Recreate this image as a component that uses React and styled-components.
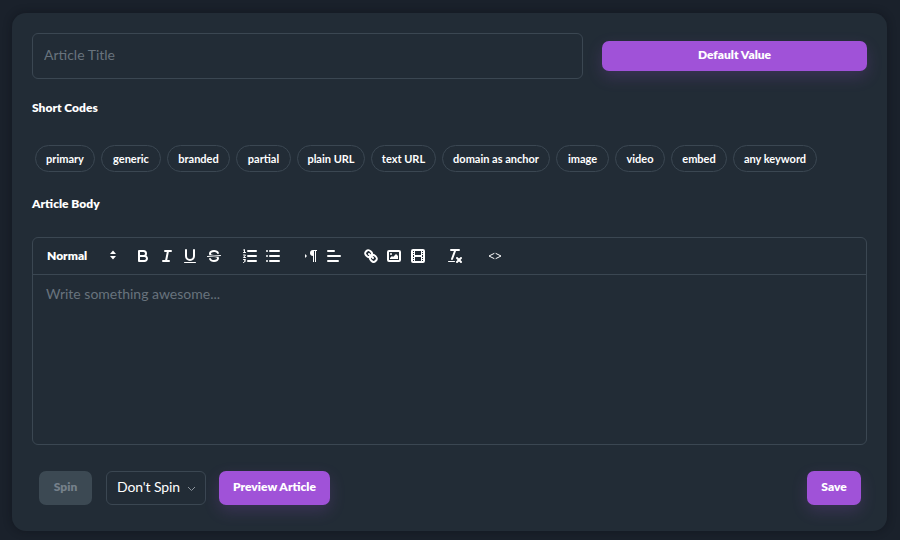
import React from 'react';
import styled, { createGlobalStyle } from 'styled-components';

const GlobalStyle = createGlobalStyle`
  html, body { margin: 0; padding: 0; background: #1a212b; }
  body { font-family: "Lato", "Liberation Sans", sans-serif; }
  * { box-sizing: border-box; }
`;

const Page = styled.div`
  width: 900px;
  height: 540px;
  padding: 13px 13px 9px 12px;
  overflow: hidden;
`;

const Card = styled.div`
  height: 518px;
  padding: 20px;
  background: #222c36;
  border-radius: 14px;
  box-shadow: 0 0 8px rgba(10, 14, 20, 0.45);
  display: flex;
  flex-direction: column;
`;

const TopRow = styled.div`
  display: flex;
  align-items: center;
  gap: 19px;
`;

const TitleInput = styled.input`
  width: 551px;
  height: 46px;
  padding: 0 11px 3px;
  background: transparent;
  border: 1px solid #3b4752;
  border-radius: 6px;
  outline: 0;
  color: #fff;
  font: 400 14px "Lato", sans-serif;
  &::placeholder { color: #68737d; opacity: 1; }
`;

const Button = styled.button`
  height: ${(p) => p.$h || 34}px;
  width: ${(p) => p.$w}px;
  padding: 0 0 3px;
  border: 0;
  border-radius: 7px;
  background: ${(p) => (p.disabled ? '#3c4953' : '#a052d8')};
  color: ${(p) => (p.disabled ? '#75808a' : '#fff')};
  font: 800 12px "Lato", sans-serif;
  box-shadow: ${(p) => (p.disabled ? 'none' : '0 6px 16px rgba(160, 82, 216, 0.2)')};
`;

const Label = styled.div`
  color: #fff;
  font-size: 12px;
  font-weight: 800;
  line-height: 16px;
  margin-top: ${(p) => p.$top}px;
`;

const Chips = styled.div`
  display: flex;
  gap: 6px;
  margin: 29px 0 0 3px;
`;

const Chip = styled.span`
  height: 27px;
  width: ${(p) => p.$w}px;
  padding-bottom: 1px;
  display: flex;
  align-items: center;
  justify-content: center;
  border: 1px solid #3b4752;
  border-radius: 14px;
  color: #fff;
  font-size: 11px;
  font-weight: 700;
`;

const Editor = styled.div`
  height: 208px;
  margin-top: 25px;
  border: 1px solid #3b4752;
  border-radius: 6px;
  display: flex;
  flex-direction: column;
`;

const Toolbar = styled.div`
  height: 37px;
  flex: none;
  display: flex;
  align-items: center;
  padding-left: 14px;
  border-bottom: 1px solid #3b4752;
`;

const Picker = styled.div`
  width: 84.5px;
  padding: 0 15px 2px 0;
  display: flex;
  align-items: center;
  justify-content: space-between;
  color: #fff;
  font-size: 12px;
  font-weight: 800;
`;

const ToolGroup = styled.div`
  display: flex;
  margin-left: ${(p) => p.$gap}px;
`;

const Tool = styled.span`
  width: 23.5px;
  height: 24px;
  display: flex;
  align-items: center;
  justify-content: center;
  & svg { width: 18px; height: 18px; fill: none; stroke: #fff; stroke-width: 2; stroke-linecap: round; stroke-linejoin: round; }
  & .thin { stroke-width: 1; }
  & .fill { fill: #fff; stroke: none; }
`;

const EditorBody = styled.div`
  flex: 1;
  padding: 9px 13px;
  color: #68737d;
  font-size: 14px;
  line-height: 20px;
`;

const BottomRow = styled.div`
  display: flex;
  align-items: center;
  margin: 26px 6px 0 7px;
`;

const SelectBox = styled.div`
  width: 100px;
  height: 34px;
  margin: 0 13px 0 14px;
  padding: 0 9px 3px 10px;
  display: flex;
  align-items: center;
  justify-content: space-between;
  border: 1px solid #3b4752;
  border-radius: 6px;
  color: #fff;
  font-size: 14px;
  letter-spacing: -0.1px;
`;

const Chevron = styled.svg`
  width: 9px;
  height: 6px;
  margin-top: 4px;
`;

const SaveSlot = styled.div`
  margin-left: auto;
`;

const Bold = () => (
  <svg viewBox="0 0 18 18"><path d="M5,4H9.5A2.5,2.5,0,0,1,12,6.5v0A2.5,2.5,0,0,1,9.5,9H5V4Z" /><path d="M5,9h5.5A2.5,2.5,0,0,1,13,11.5v0A2.5,2.5,0,0,1,10.5,14H5V9Z" /></svg>
);
const Italic = () => (
  <svg viewBox="0 0 18 18"><line x1="7" x2="13" y1="4" y2="4" /><line x1="5" x2="11" y1="14" y2="14" /><line x1="8" x2="10" y1="14" y2="4" /></svg>
);
const Underline = () => (
  <svg viewBox="0 0 18 18"><path d="M5,3V9a4,4,0,0,0,4,4H9a4,4,0,0,0,4-4V3" /><rect className="fill" height="1" rx=".5" width="12" x="3" y="15" /></svg>
);
const Strike = () => (
  <svg viewBox="0 0 18 18">
    <line className="thin" x1="15.5" x2="2.5" y1="8.5" y2="9.5" />
    <path className="fill" d="M9.007,8C6.542,7.791,6,7.519,6,6.5,6,5.792,7.283,5,9,5c1.571,0,2.765.679,2.969,1.309a1,1,0,0,0,1.9-.617C13.356,4.106,11.354,3,9,3,6.2,3,4,4.538,4,6.5a3.2,3.2,0,0,0,.5,1.843Z" />
    <path className="fill" d="M8.984,10C11.457,10.208,12,10.479,12,11.5c0,.708-1.283,1.5-3,1.5-1.571,0-2.765-.679-2.969-1.309a1,1,0,1,0-1.9.617C4.644,13.894,6.646,15,9,15c2.8,0,5-1.538,5-3.5a3.2,3.2,0,0,0-.5-1.843Z" />
  </svg>
);
const Ordered = () => (
  <svg viewBox="0 0 18 18">
    <line x1="7" x2="15" y1="4" y2="4" /><line x1="7" x2="15" y1="9" y2="9" /><line x1="7" x2="15" y1="14" y2="14" />
    <path className="thin" d="M2.5,3 L3.5,2.5 V5.5 M2.5,5.5 H4.5 M2.5,8 H4.5 L2.5,10.5 H4.5 M2.5,12.5 H4.5 L3.5,14 H4.5 L2.5,15.5" />
  </svg>
);
const Bullet = () => (
  <svg viewBox="0 0 18 18">
    <line x1="6" x2="15" y1="4" y2="4" /><line x1="6" x2="15" y1="9" y2="9" /><line x1="6" x2="15" y1="14" y2="14" />
    <line x1="3" x2="3" y1="4" y2="4" /><line x1="3" x2="3" y1="9" y2="9" /><line x1="3" x2="3" y1="14" y2="14" />
  </svg>
);
const Direction = () => (
  <svg viewBox="0 0 18 18">
    <polygon className="fill" points="3 11 5 9 3 7" />
    <path className="fill" d="M11,3a3,3,0,0,0,0,6h1V3H11Z" />
    <path className="fill" d="M11,3h4v1h-4Z" />
    <rect className="fill" height="11" width="1" x="11" y="4" />
    <rect className="fill" height="11" width="1" x="13" y="4" />
  </svg>
);
const Align = () => (
  <svg viewBox="0 0 18 18"><line x1="3" x2="15" y1="9" y2="9" /><line x1="3" x2="13" y1="14" y2="14" /><line x1="3" x2="9" y1="4" y2="4" /></svg>
);
const LinkIcon = () => (
  <svg viewBox="0 0 18 18">
    <line x1="7" x2="11" y1="7" y2="11" />
    <path d="M8.9,4.577a3.476,3.476,0,0,1,.36,4.679A3.476,3.476,0,0,1,4.577,8.9C3.185,7.5,2.035,6.4,4.217,4.217S7.5,3.185,8.9,4.577Z" />
    <path d="M13.423,9.1a3.476,3.476,0,0,0-4.679-.36,3.476,3.476,0,0,0,.36,4.679c1.392,1.392,2.5,2.542,4.679.36S14.815,10.5,13.423,9.1Z" />
  </svg>
);
const ImageIcon = () => (
  <svg viewBox="0 0 18 18">
    <rect height="10" width="12" x="3" y="4" rx="1" />
    <circle className="fill" cx="6" cy="7" r="1" />
    <polygon className="fill" points="5 12 5 11 7 9 8 10 11 7 13 9 13 12" />
  </svg>
);
const VideoIcon = () => (
  <svg viewBox="0 0 18 18">
    <rect height="12" width="12" x="3" y="3" rx="1" />
    <rect className="fill" height="12" width="1" x="5" y="3" />
    <rect className="fill" height="12" width="1" x="12" y="3" />
    <rect className="fill" height="2" width="8" x="5" y="8" />
    <rect className="fill" height="1" width="3" x="3" y="5" />
    <rect className="fill" height="1" width="3" x="3" y="7" />
    <rect className="fill" height="1" width="3" x="3" y="10" />
    <rect className="fill" height="1" width="3" x="3" y="12" />
    <rect className="fill" height="1" width="3" x="12" y="5" />
    <rect className="fill" height="1" width="3" x="12" y="7" />
    <rect className="fill" height="1" width="3" x="12" y="10" />
    <rect className="fill" height="1" width="3" x="12" y="12" />
  </svg>
);
const Clean = () => (
  <svg viewBox="0 0 18 18">
    <line x1="5" x2="13" y1="3" y2="3" /><line x1="6" x2="9.35" y1="12" y2="3" />
    <line x1="11" x2="15" y1="11" y2="15" /><line x1="15" x2="11" y1="11" y2="15" />
    <rect className="fill" height="1" rx=".5" width="7" x="2" y="14" />
  </svg>
);
const Code = () => (
  <svg viewBox="0 0 18 18"><polyline className="thin" points="8 6.5 3 9 8 11.5" /><polyline className="thin" points="10 6.5 15 9 10 11.5" /></svg>
);

const chips = [
  ['primary', 60], ['generic', 60], ['branded', 63], ['partial', 55], ['plain URL', 68], ['text URL', 65],
  ['domain as anchor', 108], ['image', 53], ['video', 50], ['embed', 56], ['any keyword', 84],
];

const toolGroups = [
  { gap: 0, items: [Bold, Italic, Underline, Strike] },
  { gap: 12.5, items: [Ordered, Bullet] },
  { gap: 14, items: [Direction, Align] },
  { gap: 13, items: [LinkIcon, ImageIcon, VideoIcon] },
  { gap: 13.5, items: [Clean] },
  { gap: 16.5, items: [Code] },
];

export default function App() {
  return (
    <Page>
      <GlobalStyle />
      <Card>
        <TopRow>
          <TitleInput placeholder="Article Title" />
          <Button $w={265} $h={30}>Default Value</Button>
        </TopRow>
        <Label $top={21}>Short Codes</Label>
        <Chips>
          {chips.map(([name, w]) => <Chip key={name} $w={w}>{name}</Chip>)}
        </Chips>
        <Label $top={24}>Article Body</Label>
        <Editor>
          <Toolbar>
            <Picker>
              Normal
              <svg width="8" height="10" viewBox="0 0 8 10"><path d="M4 0.5 7 4H1Z M4 9.5 1 6h6Z" fill="#fff" /></svg>
            </Picker>
            {toolGroups.map((g, i) => (
              <ToolGroup key={i} $gap={g.gap}>
                {g.items.map((Icon, j) => <Tool key={j}><Icon /></Tool>)}
              </ToolGroup>
            ))}
          </Toolbar>
          <EditorBody>Write something awesome...</EditorBody>
        </Editor>
        <BottomRow>
          <Button disabled $w={53}>Spin</Button>
          <SelectBox>
            Don't Spin
            <Chevron viewBox="0 0 9 6"><path d="M1 1l3.5 3.5L8 1" fill="none" stroke="#8b949c" strokeWidth="1" /></Chevron>
          </SelectBox>
          <Button $w={111}>Preview Article</Button>
          <SaveSlot><Button $w={54}>Save</Button></SaveSlot>
        </BottomRow>
      </Card>
    </Page>
  );
}
